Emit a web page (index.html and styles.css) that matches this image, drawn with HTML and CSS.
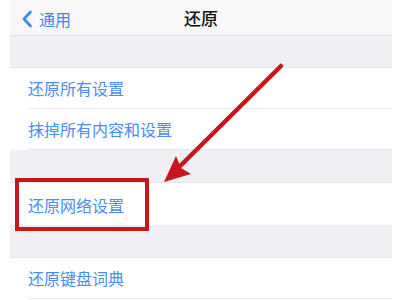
FILE: index.html
```html
<!DOCTYPE html>
<html lang="zh">
<head>
    <meta charset="utf-8">
    <title>还原</title>
    <link rel="stylesheet" href="styles.css">
</head>
<body>
    <div class="screen">
        <header class="navbar">
            <a class="back">
                <svg class="chevron" width="12" height="18" viewBox="0 0 12 18">
                    <path d="M9.5 2 L3 9 L9.5 16" fill="none" stroke="#3d86f2" stroke-width="2.6" stroke-linecap="round" stroke-linejoin="round"/>
                </svg>
                <span>通用</span>
            </a>
            <h1>还原</h1>
        </header>
        <div class="gap"></div>
        <ul class="group">
            <li>还原所有设置</li>
            <li>抹掉所有内容和设置</li>
        </ul>
        <div class="gap"></div>
        <ul class="group">
            <li class="plain">还原网络设置</li>
        </ul>
        <div class="gap"></div>
        <ul class="group">
            <li>还原键盘词典</li>
        </ul>

        <div class="highlight"></div>
        <svg class="arrow" width="400" height="300" viewBox="0 0 400 300">
            <path d="M281 66 L170 176" stroke="#c8161d" stroke-width="4.5" stroke-linecap="round"/>
            <path d="M164 182 L176 156 L181 168 L191 174 Z" fill="#c8161d"/>
        </svg>
    </div>
</body>
</html>
```

FILE: styles.css
```css
html,
body {
    margin: 0;
    padding: 0;
    background-color: white;
}

body {
    font-family: "Noto Sans CJK SC", "Noto Sans", sans-serif;
}

.screen {
    position: relative;
    width: 400px;
    height: 300px;
    overflow: hidden;
}

.navbar {
    margin: 0 8px 0 10px;
    height: 35px;
    background-color: #f7f7f8;
    border-bottom: 1px solid #e1e1e4;
    display: flex;
    align-items: center;
    justify-content: center;
    position: relative;
}

.navbar h1 {
    margin: 0;
    font-size: 17px;
    font-weight: 500;
    color: #111;
}

.back {
    position: absolute;
    left: 11px;
    top: 7px;
    display: flex;
    align-items: center;
    gap: 6px;
    color: #3d86f2;
    font-size: 16px;
}

.gap {
    margin: 0 8px 0 10px;
    height: 32px;
    background-color: #efeff4;
    border-bottom: 1px solid #e6e6ea;
}

.navbar + .gap {
    height: 31px;
}

.group {
    list-style: none;
    margin: 0 8px 0 10px;
    padding: 0;
    background-color: white;
}

.group li {
    margin-left: 18px;
    height: 40px;
    line-height: 40px;
    font-size: 16px;
    color: #4a8cf0;
    border-bottom: 1px solid #e8e8eb;
}

.group li.plain {
    height: 42px;
    line-height: 44px;
    border-bottom: none;
}

.highlight {
    position: absolute;
    left: 15px;
    top: 178px;
    width: 126px;
    height: 45px;
    border: 4px solid #c8161d;
}

.arrow {
    position: absolute;
    left: 0;
    top: 0;
}
```
